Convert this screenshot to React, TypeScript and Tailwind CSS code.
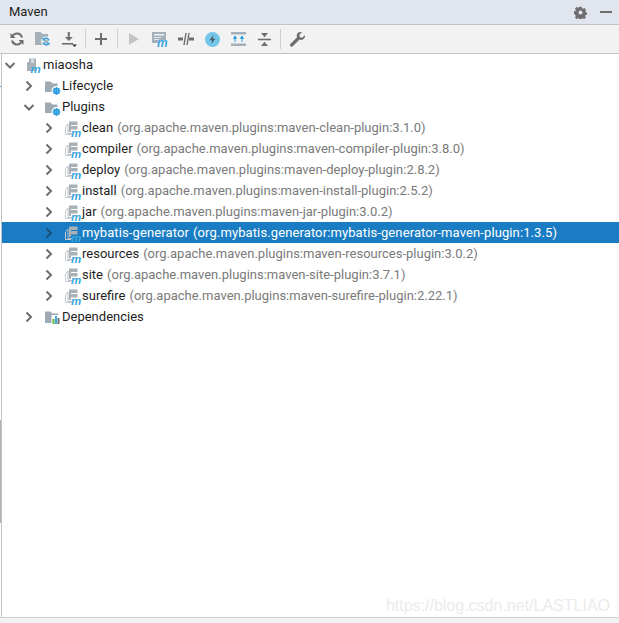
const FONT = "font-['Roboto','Noto_Sans',sans-serif]"

const plugins = [
  ['clean', '(org.apache.maven.plugins:maven-clean-plugin:3.1.0)'],
  ['compiler', '(org.apache.maven.plugins:maven-compiler-plugin:3.8.0)'],
  ['deploy', '(org.apache.maven.plugins:maven-deploy-plugin:2.8.2)'],
  ['install', '(org.apache.maven.plugins:maven-install-plugin:2.5.2)'],
  ['jar', '(org.apache.maven.plugins:maven-jar-plugin:3.0.2)'],
  ['mybatis-generator', '(org.mybatis.generator:mybatis-generator-maven-plugin:1.3.5)'],
  ['resources', '(org.apache.maven.plugins:maven-resources-plugin:3.0.2)'],
  ['site', '(org.apache.maven.plugins:maven-site-plugin:3.7.1)'],
  ['surefire', '(org.apache.maven.plugins:maven-surefire-plugin:2.22.1)'],
]

function Chevron({ open, selected }: { open?: boolean; selected?: boolean }) {
  const color = selected ? '#1c4f78' : '#6e6e6e'
  return (
    <svg width="16" height="16" viewBox="0 0 16 16" fill="none" className="shrink-0">
      {open ? (
        <path d="M3.5 6l4.5 4.5L12.5 6" stroke={color} strokeWidth="2" />
      ) : (
        <path d="M5.5 3.5L10 8l-4.5 4.5" stroke={color} strokeWidth="2" />
      )}
    </svg>
  )
}

function MLetter({ x, y, size = 11 }: { x: number; y: number; size?: number }) {
  return (
    <text x={x} y={y} fontSize={size} fontStyle="italic" fontWeight="700" fontFamily="Liberation Sans, sans-serif" fill="#3aa6dd">
      m
    </text>
  )
}

// tree icons are 24 tall so they overhang the 21px row a little
function ProjectIcon() {
  return (
    <svg width="16" height="24" viewBox="0 0 16 24" className="shrink-0">
      <path d="M1 9h2V5.500h7V18H1z" fill="#a8b1b8" />
      <path d="M5 5.500h3V10H5z" fill="#d5dade" />
      <MLetter x={4.500} y={20} size={11.500} />
    </svg>
  )
}

function FolderGearIcon() {
  return (
    <svg width="17" height="24" viewBox="0 0 17 24" className="shrink-0">
      <path d="M0 7.500h5.500l2 2H12.500V18H0z" fill="#9fabb4" />
      <circle cx="11.500" cy="17" r="5" fill="#fff" />
      <circle cx="11.500" cy="17" r="2.400" fill="none" stroke="#2f9fe0" strokeWidth="2" />
      <path d="M11.500 13v8M7.500 17h8M8.700 14.200l5.600 5.600M14.300 14.200l-5.600 5.600" stroke="#2f9fe0" strokeWidth="1" />
    </svg>
  )
}

function DependenciesIcon() {
  return (
    <svg width="17" height="24" viewBox="0 0 17 24" className="shrink-0">
      <path d="M0 6.500h5.500l2 2H13V18H0z" fill="#9fabb4" />
      <path d="M6.500 10h8v10h-8z" fill="#fff" />
      <path d="M7.500 14h2v5h-2z" fill="#62b543" />
      <path d="M10 11h2v8h-2z" fill="#40a8e0" />
      <path d="M12.500 13h2v6h-2z" fill="#6e6e6e" />
    </svg>
  )
}

function PluginIcon() {
  return (
    <svg width="17" height="24" viewBox="0 0 17 24" className="shrink-0">
      <path d="M0.600 10.500L3 8v9.500h4" fill="none" stroke="#b6bdc3" strokeWidth="1" />
      <path d="M0.500 11v7.500H6" fill="none" stroke="#c6cdd2" strokeWidth="1" />
      <path d="M4 5.500h8.500V9H6v1h6.500v3.500H6V16H4z" fill="#a8b1b8" />
      <MLetter x={6} y={20.500} size={11.500} />
    </svg>
  )
}

function TreeRow({
  level,
  open,
  selected,
  icon,
  name,
  detail,
}: {
  level: string
  open?: boolean
  selected?: boolean
  icon: React.ReactNode
  name: string
  detail?: string
}) {
  return (
    <div className={`flex h-[21px] items-center ${level} ${selected ? 'bg-[#1a7dc4] text-white tracking-[0.11px]' : 'text-[#1e1e1e]'}`}>
      <div className="flex w-[24px] shrink-0">
        <Chevron open={open} selected={selected} />
      </div>
      <div className="flex w-[17px] shrink-0 justify-start">{icon}</div>
      <span className="whitespace-nowrap text-[13px] leading-[21px]">{name}</span>
      {detail && (
        <span className={`ml-[4px] whitespace-nowrap text-[13px] leading-[21px] ${selected ? 'text-white' : 'text-[#7a7a7a]'}`}>{detail}</span>
      )}
    </div>
  )
}

function ToolButton({ children }: { children: React.ReactNode }) {
  return <div className="flex h-[28px] w-[26px] shrink-0 items-center justify-center">{children}</div>
}

function Separator({ className }: { className: string }) {
  return <div className={`h-[20px] w-px shrink-0 bg-[#cfcfcf] ${className}`} />
}

const GRAY = '#6e6e6e'

export default function App() {
  return (
    <div className={`relative flex h-screen w-full flex-col overflow-hidden bg-white ${FONT}`}>
      {/* title bar */}
      <div className="flex h-[25px] shrink-0 items-center justify-between border-b border-[#c4c4c4] bg-[#e1e5ed] pr-[7px] pl-[9px]">
        <span className="text-[13px] text-[#1e1e1e]">Maven</span>
        <div className="flex items-center gap-[13px]">
          <svg width="13" height="13" viewBox="0 0 16 16">
            <path
              fillRule="evenodd"
              fill={GRAY}
              d="M6.600 1h2.800l.4 1.900 1.300.6 1.700-1 2 2-1 1.700.6 1.300 1.600.4v2.800l-1.900.4-.5 1.300 1 1.700-2 2-1.700-1-1.300.5-.5 1.900H6.600l-.4-1.900-1.300-.5-1.700 1-2-2 1-1.700-.6-1.300L0 9.400V6.600l1.600-.4.6-1.300-1-1.700 2-2 1.700 1 1.300-.6zM8 5.500a2.500 2.500 0 100 5 2.500 2.500 0 000-5z"
            />
          </svg>
          <div className="h-[2px] w-[12px] bg-[#6e6e6e]" />
        </div>
      </div>

      {/* toolbar */}
      <div className="flex h-[29px] shrink-0 items-center border-b border-[#c4c4c4] bg-[#f2f2f2] pl-[4px]">
        <ToolButton>
          <svg width="16" height="16" viewBox="0 0 16 16" fill="none">
            <path d="M13 6.500A5.200 5.200 0 003.500 5M3 9.500A5.200 5.200 0 0012.500 11" stroke={GRAY} strokeWidth="2" />
            <path d="M1.500 2v5h5zM14.500 14V9h-5z" fill={GRAY} />
          </svg>
        </ToolButton>
        <ToolButton>
          <svg width="16" height="16" viewBox="0 0 16 16" fill="none">
            <path d="M0 1h5.500l2 2H13v11H0z" fill="#a4b0b9" />
            <circle cx="11" cy="10.500" r="3.500" stroke="#f2f2f2" strokeWidth="3" />
            <path d="M14 9.500a3.200 3.200 0 00-5.600-1M8 11.500a3.200 3.200 0 005.600 1" stroke="#2f9fe0" strokeWidth="1.600" />
            <path d="M7.500 6.500v3h3zM14.500 14.500v-3h-3z" fill="#2f9fe0" />
          </svg>
        </ToolButton>
        <ToolButton>
          <svg width="16" height="16" viewBox="0 0 16 16" fill="none">
            <path d="M6.800 1h2v5h3L7.800 10 4 6h2.800z" fill={GRAY} />
            <path d="M1 12h11v1.600H1z" fill={GRAY} />
            <path d="M11 13.500h5L13.500 16z" fill="#333" />
          </svg>
        </ToolButton>
        <Separator className="ml-[3px] mr-[2px]" />
        <ToolButton>
          <svg width="14" height="14" viewBox="0 0 14 14">
            <path d="M6 1h2v5h5v2H8v5H6V8H1V6h5z" fill={GRAY} />
          </svg>
        </ToolButton>
        <Separator className="ml-[3px] mr-[3px]" />
        <ToolButton>
          <svg width="16" height="16" viewBox="0 0 16 16">
            <path d="M3 2l10 6-10 6z" fill="#c4c4c4" />
          </svg>
        </ToolButton>
        <ToolButton>
          <svg width="16" height="18" viewBox="0 0 16 18">
            <path d="M0 2h14v11H0z" fill="#a4b0b9" />
            <path d="M2 4h10v1.500H2z" fill="#f2f2f2" />
            <path d="M2 7h7v1H2zM2 9h5v1H2z" fill="#e0e4e7" />
            <path d="M6 10h10v8H6z" fill="#f2f2f2" />
            <MLetter x={5} y={16.500} size={12} />
          </svg>
        </ToolButton>
        <ToolButton>
          <svg width="16" height="16" viewBox="0 0 16 16" fill="none">
            <path d="M0 6.500h5v3H0zM11 6.500h5v3h-5z" fill={GRAY} />
            <path d="M6 14L8 2M9 14l2-12" stroke={GRAY} strokeWidth="1.400" />
          </svg>
        </ToolButton>
        <ToolButton>
          <svg width="15" height="15" viewBox="0 0 15 15">
            <circle cx="7.500" cy="7.500" r="7.500" fill="#73c6e8" />
            <path d="M8.500 3L4.500 8.200h2.600L6.300 12l4-5.200H7.800z" fill="#4a5a66" />
          </svg>
        </ToolButton>
        <ToolButton>
          <svg width="15" height="14" viewBox="0 0 15 14">
            <path d="M0 0h15v2.500H0zM0 11.500h15V14H0z" fill="#a4b0b9" />
            <path d="M4 5v5M11 5v5M2.500 6.500L4 4l1.500 2.500zM9.500 6.500L11 4l1.500 2.500z" stroke="#2f9fe0" strokeWidth="1" fill="#2f9fe0" />
          </svg>
        </ToolButton>
        <ToolButton>
          <svg width="13" height="13" viewBox="0 0 13 13">
            <path d="M0 5.700h13v1.600H0z" fill={GRAY} />
            <path d="M3 0h7L6.500 4.200zM3 13h7L6.500 8.800z" fill={GRAY} />
          </svg>
        </ToolButton>
        <Separator className="ml-[3px] mr-[3px]" />
        <ToolButton>
          <svg width="15" height="15" viewBox="0 0 15 15">
            <path d="M14.800 3.300l-2.600 2.500-2.300-.6-.6-2.300L11.800.3C9.800-.4 7.700.4 7 2.300c-.4 1.100-.3 2 .1 2.900L.6 11.700c-.8.800-.8 1.800-.1 2.500.7.700 1.700.7 2.500-.1l6.500-6.500c.9.400 1.900.5 2.900.1 1.900-.7 3-2.500 2.400-4.400z" fill={GRAY} />
          </svg>
        </ToolButton>
      </div>

      {/* tree */}
      <div className="flex min-h-0 flex-1">
        <div className="flex w-[2px] shrink-0 flex-col border-r border-[#c4c4c4]">
          <div className="h-[32px]" />
          <div className="h-[1px] bg-[#3a9ad9]" />
          <div className="h-[333px]" />
          <div className="h-[103px] bg-[#b0b0b0]" />
        </div>
        <div className="min-w-0 flex-1">
          <TreeRow level="pl-0" open icon={<ProjectIcon />} name="miaosha" />
          <TreeRow level="pl-[19px]" icon={<FolderGearIcon />} name="Lifecycle" />
          <TreeRow level="pl-[19px]" open icon={<FolderGearIcon />} name="Plugins" />
          {plugins.map(([name, detail]) => (
            <TreeRow
              key={name}
              level="pl-[39px]"
              selected={name === 'mybatis-generator'}
              icon={<PluginIcon />}
              name={name}
              detail={detail}
            />
          ))}
          <TreeRow level="pl-[19px]" icon={<DependenciesIcon />} name="Dependencies" />
        </div>
      </div>

      {/* status strip */}
      <div className="h-[6px] shrink-0 border-t border-[#cfcfcf] bg-[#f2f2f2]" />

      {/* blog watermark */}
      <span className="absolute right-[9px] bottom-[5px] font-['Liberation_Sans',sans-serif] text-[16px] text-[#ebebeb]">
        https://blog.csdn.net/LASTLIAO
      </span>
    </div>
  )
}
